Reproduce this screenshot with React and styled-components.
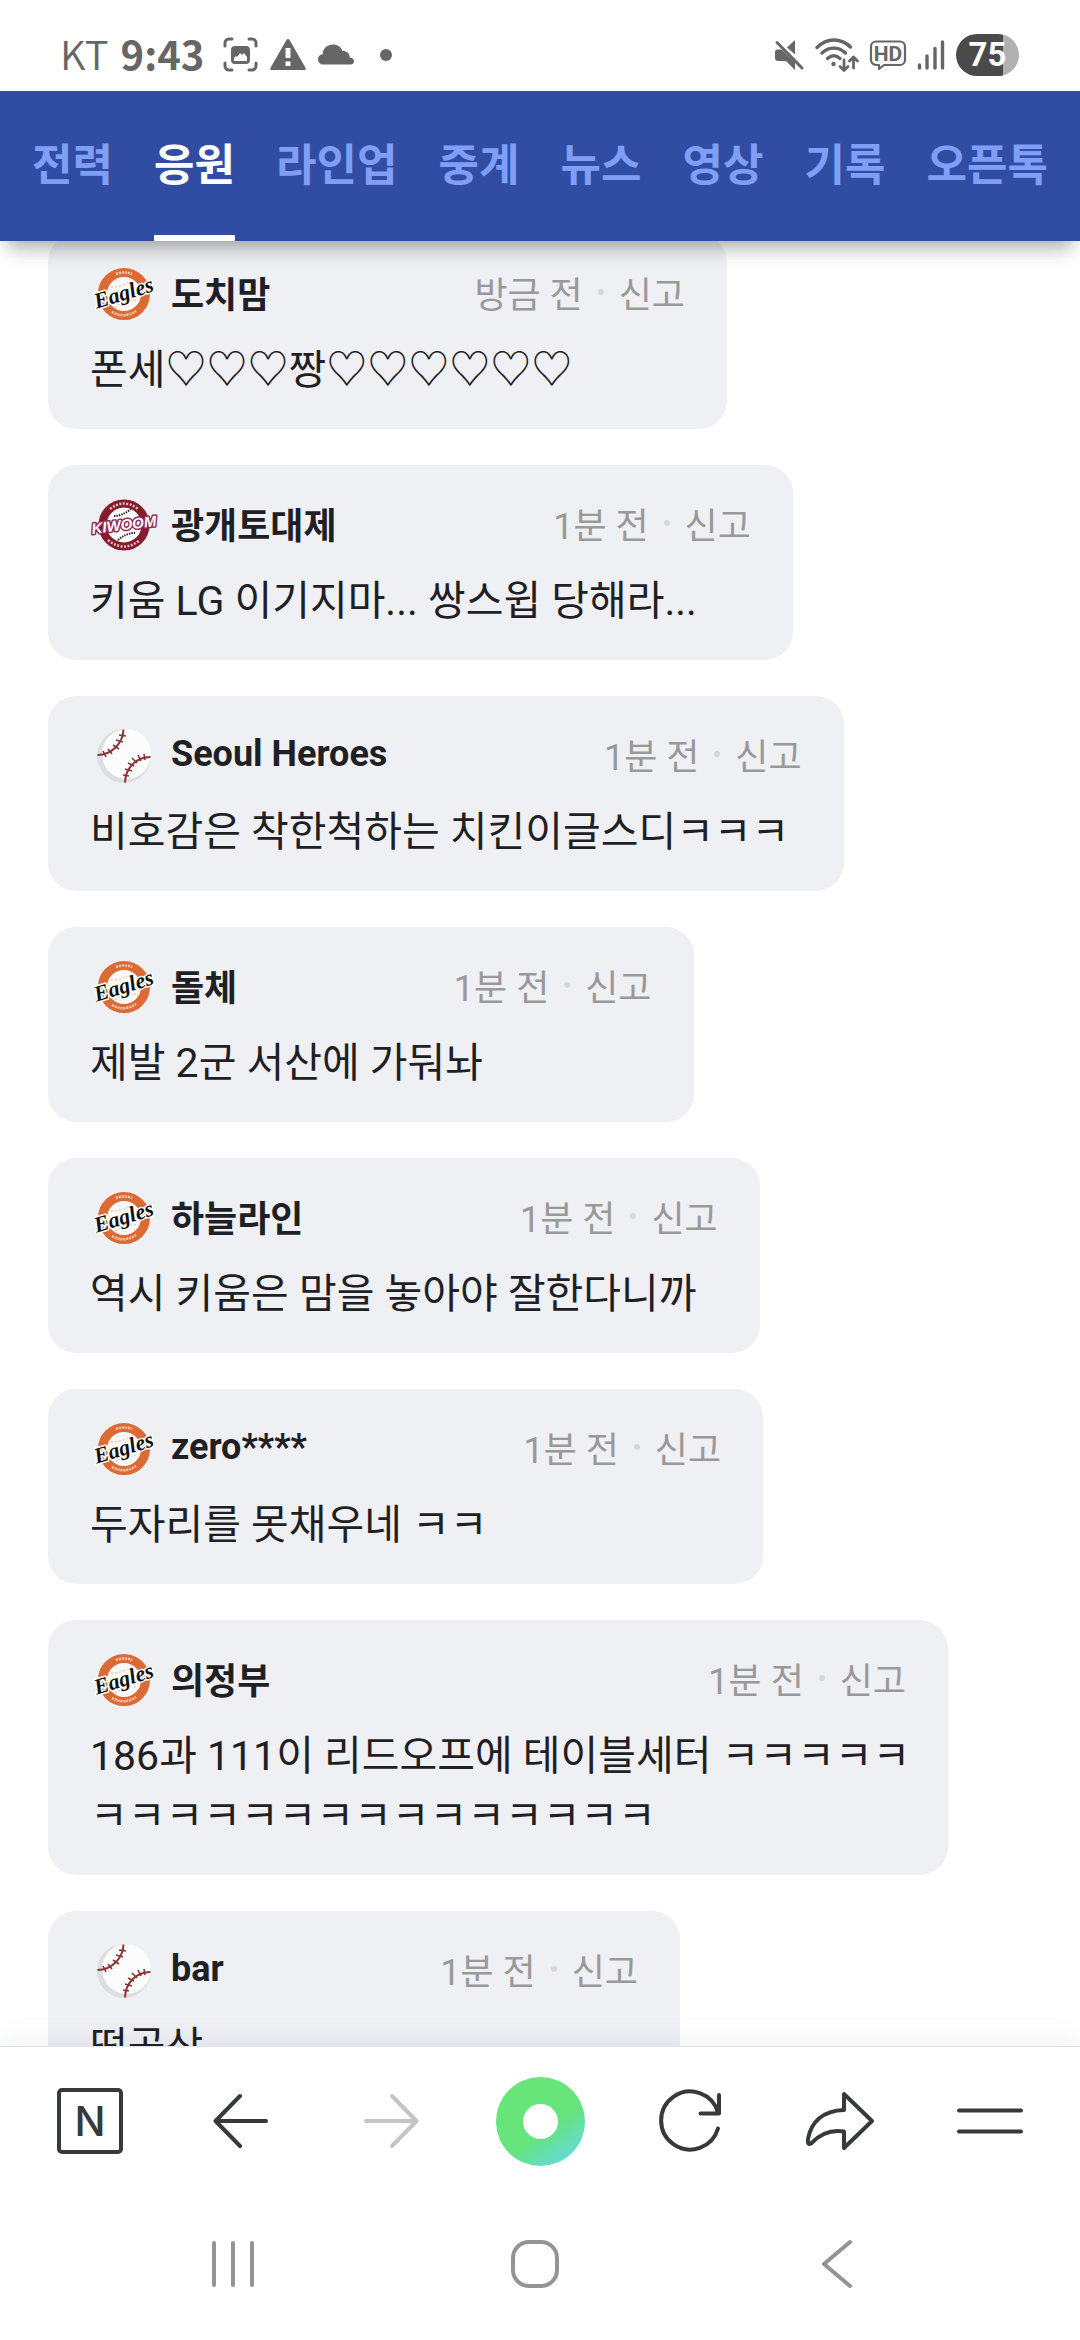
import React from 'react';
import styled, { createGlobalStyle } from 'styled-components';

const GlobalStyle = createGlobalStyle`
  * { box-sizing: border-box; }
  body {
    margin: 0;
    background: #fff;
    color: #1f2023;
    font-family: Roboto, 'Noto Sans CJK KR', sans-serif;
  }
  button { border: 0; padding: 0; background: none; font: inherit; color: inherit; cursor: pointer; }
  ul, p { margin: 0; padding: 0; list-style: none; }
  svg { display: block; flex: none; overflow: visible; }
`;

const Screen = styled.div`
  display: flex;
  flex-direction: column;
  height: 100vh;
  overflow: hidden;
`;

const StatusBar = styled.header`
  display: flex;
  flex: none;
  align-items: center;
  justify-content: space-between;
  height: 91px;
  padding: 18px 61px 0 60px;
  color: #666;
  font-family: 'Noto Sans CJK KR', sans-serif;
`;

const StatusGroup = styled.div`
  display: flex;
  align-items: center;
  gap: ${(p) => p.$gap}px;
`;

const Carrier = styled.span`
  padding-bottom: 4px;
  font-size: 40px;
  line-height: 40px;
  font-weight: 350;
`;

const Clock = styled.span`
  margin-right: 7px;
  padding-bottom: 4px;
  font-size: 40px;
  line-height: 40px;
  font-weight: 700;
`;

const MoreDot = styled.span`
  width: 12px;
  height: 12px;
  margin-left: 14px;
  border-radius: 50%;
  background: #666;
`;

const Battery = styled.span`
  width: 63px;
  height: 42px;
  border-radius: 21px;
  background: linear-gradient(90deg, #4a4a4a 75%, #b0b0b0 75%);
  color: #fff;
  font-family: Roboto, sans-serif;
  font-size: 33px;
  font-weight: 700;
  line-height: 42px;
  text-align: center;
`;

const TabBar = styled.nav`
  position: relative;
  z-index: 1;
  display: flex;
  flex: none;
  justify-content: space-between;
  height: 150px;
  padding: 0 32px;
  background: #314da3;
  box-shadow: 0 14px 18px -8px rgba(40, 40, 40, 0.42);
`;

const Tab = styled.button`
  padding-bottom: 2px;
  border-bottom: 6px solid ${(p) => (p.$active ? '#fff' : 'transparent')};
  color: ${(p) => (p.$active ? '#fff' : '#809ef5')};
  font-family: 'Noto Sans CJK KR', sans-serif;
  font-size: 44px;
  font-weight: 700;
  line-height: 142px;
`;

const Feed = styled.main`
  flex: 1;
  min-height: 0;
  overflow: hidden;
`;

const CommentList = styled.ul`
  display: flex;
  flex-direction: column;
  align-items: flex-start;
  gap: 36px;
  margin-top: -7px;
  padding: 0 132px 0 48px;
`;

const Comment = styled.li`
  max-width: 100%;
  padding: 30px 34px 29px 42px;
  border-radius: 28px;
  background: #eff0f4;
`;

const CommentHead = styled.div`
  display: flex;
  align-items: center;
  height: 58px;
  margin-bottom: 18px;
  padding: 0 8px 2px 0;
  white-space: nowrap;
`;

const Author = styled.strong`
  margin: 0 204px 0 13px;
  font-size: 36px;
  font-weight: 700;
`;

const Meta = styled.div`
  display: flex;
  align-items: center;
  gap: 15px;
  margin-left: auto;
  color: #999;
  font-size: 36px;
`;

const Time = styled.span`
  min-width: 108px;
  text-align: right;
`;

const Separator = styled.span`
  width: 6px;
  height: 6px;
  border-radius: 50%;
  background: #d6d7da;
`;

const Message = styled.p`
  font-size: 41px;
  line-height: 60px;
  overflow-wrap: anywhere;
`;

const Toolbar = styled.nav`
  position: relative;
  display: flex;
  flex: none;
  align-items: center;
  height: 149px;
  padding: 0 15px;
  border-top: 1px solid #e1e3e7;
  background: #fff;
  box-shadow: 0 -4px 28px rgba(50, 60, 90, 0.08);
`;

const ToolButton = styled.button`
  display: flex;
  flex: 1;
  justify-content: center;
  color: ${(p) => (p.disabled ? '#c4c4c4' : '#38393d')};
`;

const HomeMark = styled.span`
  width: 66px;
  height: 66px;
  border: 4px solid #38393d;
  border-radius: 5px;
  font-family: Inter, sans-serif;
  font-size: 41px;
  font-weight: 500;
  line-height: 58px;
`;

const GreenDot = styled.span`
  display: flex;
  align-items: center;
  justify-content: center;
  width: 89px;
  height: 89px;
  border-radius: 50%;
  background: linear-gradient(145deg, #68e776 0%, #66e37c 58%, #64dbd8 88%);

  &::after {
    content: '';
    width: 35px;
    height: 35px;
    border-radius: 50%;
    background: #fff;
  }
`;

const SystemBar = styled.nav`
  position: relative;
  display: flex;
  flex: none;
  height: 145px;
  padding: 0 92px 7px 82px;
  background: #fff;
`;

const SystemButton = styled.button`
  display: flex;
  flex: 1;
  align-items: center;
  justify-content: center;
  color: #949494;
`;

const line = {
  fill: 'none',
  stroke: 'currentColor',
  strokeWidth: 4,
  strokeLinecap: 'round',
  strokeLinejoin: 'round',
};

const CaptureIcon = () => (
  <svg width="35" height="35" viewBox="0 0 35 35" aria-hidden="true">
    <path {...line} strokeWidth="3" d="M2 9V6a4 4 0 0 1 4-4h3M26 2h3a4 4 0 0 1 4 4v3M33 26v3a4 4 0 0 1-4 4h-3M9 33H6a4 4 0 0 1-4-4v-3" />
    <path fill="currentColor" fillRule="evenodd" d="M12 9h11a4 4 0 0 1 4 4v10a4 4 0 0 1-4 4H12a4 4 0 0 1-4-4V13a4 4 0 0 1 4-4zm-1 12v3h13V20l-3-4-2 2-2-2-3 4-1-1z" />
  </svg>
);

const WarningIcon = () => (
  <svg width="36" height="31" viewBox="0 0 36 31" aria-hidden="true">
    <path fill="currentColor" fillRule="evenodd" d="M18 0q1 0 1.600 1L35.600 29q.6 2-1 2H1.400q-1.600 0-1-2L16.400 1Q17 0 18 0zm-2.500 9v10h5V9zm0 13.500V27h5v-4.500z" />
  </svg>
);

const CloudIcon = () => (
  <svg width="36" height="21" viewBox="0 0 36 21" aria-hidden="true">
    <path fill="currentColor" d="M5 20.500a5 5 0 0 1-5-5.300c0-2.800 2-4.700 4.600-5C5 4 9.500.5 15 .5c4.600 0 8 2.500 9.600 6.600 4.400 0 7.200 2.600 7.200 6.600 2.500 0 4.200 1.400 4.200 3.500s-1.600 3.300-3.600 3.300z" />
  </svg>
);

const MuteIcon = () => (
  <svg width="30" height="30" viewBox="0 0 30 30" aria-hidden="true">
    <path fill="currentColor" d="M13 7.500 21 0v14.500zM3 9.500h4.500L21 22.500V30l-9-9H4q-3 0-3-3v-5.500q0-3 2-3z" />
    <path {...line} strokeWidth="3" d="M3 2.500 28 28" />
  </svg>
);

const WifiIcon = () => (
  <svg width="44" height="34" viewBox="0 0 44 34" aria-hidden="true">
    <path {...line} strokeWidth="3.400" d="M2 9.500C12-.5 26-.5 35.500 9M7 15c7-6.500 16.500-6.500 23.500 0M12.500 20.500c4-3.500 8.500-3.500 12.500 0" />
    <circle cx="18.500" cy="26" r="2.200" fill="currentColor" />
    <path {...line} strokeWidth="2.800" d="M29 22v10M25 28.500l4 4 4-4M38.500 30V19.500M34.500 23l4-4 4 4" />
  </svg>
);

const HdIcon = () => (
  <svg width="36" height="30" viewBox="0 0 36 30" aria-hidden="true">
    <path {...line} strokeWidth="2.200" d="M6 1.500h24a5 5 0 0 1 5 5V20a5 5 0 0 1-5 5H14l-5 4v-4H6a5 5 0 0 1-5-5V6.500a5 5 0 0 1 5-5z" />
    <text x="18" y="21" textAnchor="middle" fill="currentColor" fontFamily="Roboto, sans-serif" fontSize="21" fontWeight="700">HD</text>
  </svg>
);

const SignalIcon = () => (
  <svg width="28" height="30" viewBox="0 0 28 30" aria-hidden="true">
    <path {...line} strokeWidth="3.400" d="M2.500 25v3M10 16v12M18 8.500V28M25.500 2v26" />
  </svg>
);

const EaglesLogo = () => (
  <svg width="68" height="58" viewBox="0 0 68 58" role="img" aria-label="Eagles">
    <circle cx="34" cy="31" r="21.500" fill="#fbf9f7" stroke="#db6a35" strokeWidth="9" />
    <path d="M21 24c7 0 15-2 22-7M25 44c7-5 15-7 23-6" fill="none" stroke="#efc9ae" strokeWidth="1.500" strokeDasharray="2 2" />
    <path d="M26 11q8-3 16 0M22 49q12 7 24-1" fill="none" stroke="#f6cdb8" strokeWidth="2.500" strokeDasharray="2 1" />
    <g transform="rotate(-17 34 31)" fontFamily="'Liberation Serif', serif" fontSize="22" fontWeight="700" fontStyle="italic">
      <text x="34" y="37" textAnchor="middle" fill="#111" stroke="#fff" strokeWidth="3" strokeLinejoin="round" paintOrder="stroke">Eagles</text>
    </g>
  </svg>
);

const KiwoomLogo = () => (
  <svg width="68" height="58" viewBox="0 0 68 58" role="img" aria-label="Kiwoom">
    <circle cx="34" cy="31" r="21.500" fill="#fff" stroke="#861b2c" strokeWidth="8" />
    <path d="M20 15q14-11 28 0M18 46q16 13 32 0" fill="none" stroke="#e3bcc3" strokeWidth="2.500" strokeDasharray="2 1.500" />
    <path d="M24 22q8 0 17-7M28 46q8-7 17-7" fill="none" stroke="#222" strokeWidth="2" strokeDasharray="1.500 1" />
    <g transform="rotate(-7 34 31)" fontFamily="'Liberation Sans', sans-serif" fontSize="15" fontWeight="700" fontStyle="italic">
      <text x="34" y="36" textAnchor="middle" fill="#fff" stroke="#8f2a55" strokeWidth="3" strokeLinejoin="round" paintOrder="stroke">KIWOOM</text>
    </g>
  </svg>
);

const BallLogo = () => (
  <svg width="68" height="58" viewBox="0 0 68 58" role="img" aria-label="Baseball">
    <circle cx="34" cy="31" r="27" fill="#dcdee0" />
    <ellipse cx="36.500" cy="29" rx="24.500" ry="25" fill="#fcfcfc" />
    <g fill="none" stroke="#8b3434" strokeWidth="2" transform="translate(0 1)">
      <path d="M33.500 3.500C33 17 22 29 7.500 29M60.500 31C47 31 35.500 41 35 56.500" />
      <path strokeWidth="1.600" d="m13 25 3 6M18 23l4 5M23 19l6 4M26 14l7 2M29 9l7 1M54 28l1 6M48 29l3 6M42 32l5 5M38 37l6 3M35 43l7 2M33 49l6 1" />
    </g>
  </svg>
);

const logos = { eagles: EaglesLogo, kiwoom: KiwoomLogo, ball: BallLogo };

const BackArrow = () => (
  <svg width="56" height="56" viewBox="0 0 56 56" aria-hidden="true">
    <path {...line} d="M28 3 3.500 28 28 53M4 28h50" />
  </svg>
);

const ForwardArrow = () => (
  <svg width="56" height="56" viewBox="0 0 56 56" aria-hidden="true">
    <path {...line} d="m30 3 24.500 25L30 53M54 28H4" />
  </svg>
);

const ReloadIcon = () => (
  <svg width="64" height="64" viewBox="0 0 64 64" aria-hidden="true">
    <path {...line} d="M60 39.500A29 29 0 1 1 60 23.500M61 6v18.500H42.500" />
  </svg>
);

const ShareIcon = () => (
  <svg width="68" height="60" viewBox="0 0 68 60" aria-hidden="true">
    <path {...line} d="M38 3 66 30 38 57V40.500C25 38.500 14 43 5 52.500 1 54.500 2 50 2 48 5 31 17 19.500 38 19z" />
  </svg>
);

const MenuIcon = () => (
  <svg width="66" height="26" viewBox="0 0 66 26" aria-hidden="true">
    <path {...line} d="M2 2.500h62M2 23.500h62" />
  </svg>
);

const RecentsIcon = () => (
  <svg width="44" height="48" viewBox="0 0 44 48" aria-hidden="true">
    <path {...line} d="M3 3v42M22 3v42M41 3v42" />
  </svg>
);

const HomeIcon = () => (
  <svg width="50" height="50" viewBox="0 0 50 50" aria-hidden="true">
    <rect {...line} x="3" y="3" width="44" height="44" rx="16" />
  </svg>
);

const SystemBackIcon = () => (
  <svg width="32" height="50" viewBox="0 0 32 50" aria-hidden="true">
    <path {...line} d="M29 3 3 25l26 22" />
  </svg>
);

const tabs = ['전력', '응원', '라인업', '중계', '뉴스', '영상', '기록', '오픈톡'];

const comments = [
  { team: 'eagles', author: '도치맘', time: '방금 전', text: '폰세♡♡♡짱♡♡♡♡♡♡' },
  { team: 'kiwoom', author: '광개토대제', time: '1분 전', text: '키움 LG 이기지마... 쌍스윕 당해라...' },
  { team: 'ball', author: 'Seoul Heroes', time: '1분 전', text: '비호감은 착한척하는 치킨이글스디ㅋㅋㅋ' },
  { team: 'eagles', author: '돌체', time: '1분 전', text: '제발 2군 서산에 가둬놔' },
  { team: 'eagles', author: '하늘라인', time: '1분 전', text: '역시 키움은 맘을 놓아야 잘한다니까' },
  { team: 'eagles', author: 'zero****', time: '1분 전', text: '두자리를 못채우네 ㅋㅋ' },
  { team: 'eagles', author: '의정부', time: '1분 전', text: '186과 111이 리드오프에 테이블세터 ㅋㅋㅋㅋㅋㅋㅋㅋㅋㅋㅋㅋㅋㅋㅋㅋㅋㅋㅋㅋ' },
  { team: 'ball', author: 'bar', time: '1분 전', text: '떡곰상' },
];

export default function App() {
  return (
    <Screen>
      <GlobalStyle />
      <StatusBar>
        <StatusGroup $gap={12}>
          <Carrier>KT</Carrier>
          <Clock>9:43</Clock>
          <CaptureIcon />
          <WarningIcon />
          <CloudIcon />
          <MoreDot />
        </StatusGroup>
        <StatusGroup $gap={11}>
          <MuteIcon />
          <WifiIcon />
          <HdIcon />
          <SignalIcon />
          <Battery>75</Battery>
        </StatusGroup>
      </StatusBar>

      <TabBar>
        {tabs.map((name) => (
          <Tab key={name} type="button" $active={name === '응원'}>{name}</Tab>
        ))}
      </TabBar>

      <Feed>
        <CommentList>
          {comments.map(({ team, author, time, text }) => {
            const Logo = logos[team];
            return (
              <Comment key={author}>
                <CommentHead>
                  <Logo />
                  <Author>{author}</Author>
                  <Meta>
                    <Time>{time}</Time>
                    <Separator />
                    <button type="button">신고</button>
                  </Meta>
                </CommentHead>
                <Message>{text}</Message>
              </Comment>
            );
          })}
        </CommentList>
      </Feed>

      <Toolbar>
        <ToolButton type="button" aria-label="네이버 홈"><HomeMark>N</HomeMark></ToolButton>
        <ToolButton type="button" aria-label="뒤로"><BackArrow /></ToolButton>
        <ToolButton type="button" aria-label="앞으로" disabled><ForwardArrow /></ToolButton>
        <ToolButton type="button" aria-label="그린닷"><GreenDot /></ToolButton>
        <ToolButton type="button" aria-label="새로고침"><ReloadIcon /></ToolButton>
        <ToolButton type="button" aria-label="공유"><ShareIcon /></ToolButton>
        <ToolButton type="button" aria-label="메뉴"><MenuIcon /></ToolButton>
      </Toolbar>

      <SystemBar>
        <SystemButton type="button" aria-label="최근 앱"><RecentsIcon /></SystemButton>
        <SystemButton type="button" aria-label="홈"><HomeIcon /></SystemButton>
        <SystemButton type="button" aria-label="이전"><SystemBackIcon /></SystemButton>
      </SystemBar>
    </Screen>
  );
}
